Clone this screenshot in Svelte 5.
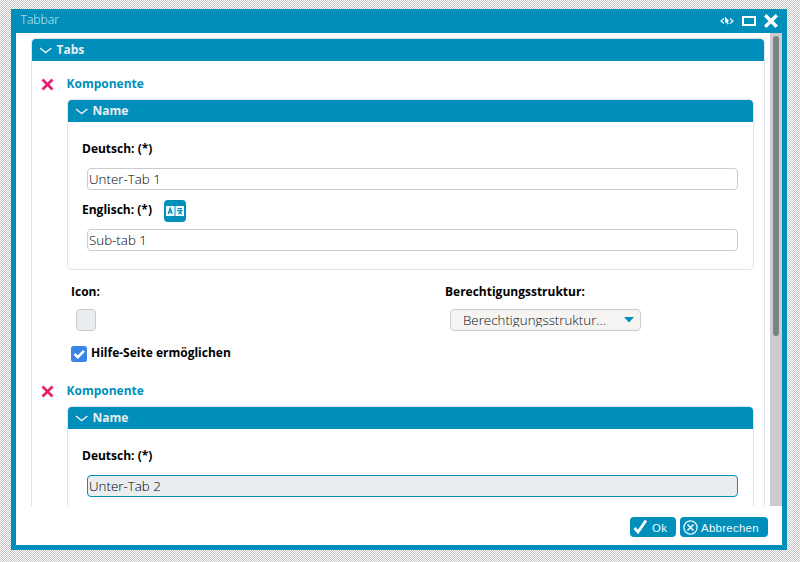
<script>
  const components = [
    { de: 'Unter-Tab 1', en: 'Sub-tab 1', focused: false },
    { de: 'Unter-Tab 2', en: 'Sub-tab 2', focused: true }
  ];
</script>

{#snippet chevron()}
  <svg class="chevron" width="14" height="8" viewBox="0 0 14 8"><path d="M1 1 6.7 5.6 12.4 1" fill="none" stroke="#e9eef2" stroke-width="1.5" /></svg>
{/snippet}

<div class="desktop">
  <section class="window">
    <header class="titlebar">
      <span class="title">Tabbar</span>
      <svg class="eye" width="14" height="10" viewBox="0 0 14 10"><path d="M4 2.5 1 5 4 7.5M10 2.5 13 5 10 7.5" fill="none" stroke="#e9f5f9" stroke-width="1.3" /><path d="M5 .8 9.3 5 7.8 5.3 8.7 8 7.4 8.6 6.4 6 5 7Z" fill="#fff" /></svg>
      <svg class="max" width="14" height="10" viewBox="0 0 14 10"><rect x="1" y="1" width="12" height="8" fill="none" stroke="#fff" stroke-width="2" /></svg>
      <svg class="close" width="14" height="14" viewBox="0 0 14 14"><path d="M1.2 1.2 12.8 12.8M12.8 1.2 1.2 12.8" stroke="#fff" stroke-width="3.4" /></svg>
    </header>
    <div class="body">
      <div class="scroll">
        <div class="panel outer">
          <div class="bar">{@render chevron()}<span>Tabs</span></div>
          {#each components as c}
            <div class="component">
              <div class="comp-title">
                <svg width="13" height="13" viewBox="0 0 13 13"><path d="M1.5 1.5 11.5 11.5M11.5 1.5 1.5 11.5" stroke="#e6216f" stroke-width="2.8" /></svg>
                <span>Komponente</span>
              </div>
              <div class="panel inner">
                <div class="bar">{@render chevron()}<span>Name</span></div>
                <div class="fields">
                  <div class="label">Deutsch: (*)</div>
                  <div class="input" class:focused={c.focused}>{c.de}</div>
                  <div class="label second">Englisch: (*)
                    <button class="translate" aria-label="Übersetzen">
                      <svg width="18" height="10" viewBox="0 0 18 10"><rect width="8.5" height="10" fill="#f2fafc" /><rect x="9.5" width="8.5" height="10" fill="#f2fafc" /><path d="M2.2 8 4.2 2.4 6.2 8M2.9 6.2H5.5" fill="none" stroke="#008fba" stroke-width="1.3" /><path d="M11.5 2.6H16M11.2 4.7H16.4M15.4 4.9 12.4 8M13.2 6 15.8 8" fill="none" stroke="#008fba" stroke-width="1.2" /></svg>
                    </button>
                  </div>
                  <div class="input">{c.en}</div>
                </div>
              </div>
              <div class="options">
                <div class="option">
                  <div class="label">Icon:</div>
                  <div class="swatch"></div>
                </div>
                <div class="option">
                  <div class="label">Berechtigungsstruktur:</div>
                  <div class="select"><span>Berechtigungsstruktur...</span><svg width="10" height="6" viewBox="0 0 10 6"><path d="M0 0H10L5 5.5Z" fill="#008fba" /></svg></div>
                </div>
              </div>
              <div class="check">
                <svg width="16" height="16" viewBox="0 0 16 16"><rect width="16" height="16" rx="2.5" fill="#3a86e6" /><path d="M3.5 8 6.8 11.2 13 4.8" fill="none" stroke="#fff" stroke-width="2.6" /></svg>
                <span class="label">Hilfe-Seite ermöglichen</span>
              </div>
            </div>
          {/each}
        </div>
      </div>
      <div class="track"><div class="thumb"></div></div>
    </div>
    <footer>
      <button class="btn ok"><svg width="15" height="16" viewBox="0 0 15 16"><path d="M1.5 9 5 13 13 1.5" fill="none" stroke="#fff" stroke-width="2.8" /></svg><span>Ok</span></button>
      <button class="btn cancel"><svg width="15" height="15" viewBox="0 0 15 15"><circle cx="7.5" cy="7.5" r="6.6" fill="none" stroke="#e9f5f9" stroke-width="1.3" /><path d="M4.5 4.5 10.5 10.5M10.5 4.5 4.5 10.5" stroke="#e9f5f9" stroke-width="1.7" /></svg><span>Abbrechen</span></button>
    </footer>
  </section>
</div>

<style>
  :global(body) { margin: 0; overflow: hidden; }
  * { box-sizing: border-box; }
  svg { display: block; flex: none; }
  .desktop {
    width: 800px; height: 562px; padding: 9px 0 0 11px;
    background: repeating-conic-gradient(#c4c4c4 0 25%, #fff 0 50%) 0 0 / 2px 2px;
    font-family: "Open Sans", sans-serif; font-size: 13.333px;
  }
  .window { width: 776px; height: 541px; background: #fff; border: solid #008fba; border-width: 0 5px 5px; display: flex; flex-direction: column; }
  .titlebar { height: 24px; background: #008fba; display: flex; align-items: center; padding-right: 4px; flex: none; }
  .title { flex: 1; color: #d6eef5; font-weight: 300; font-size: 12.2px; padding-left: 4.5px; line-height: 20px; margin-bottom: 3px; }
  .max { margin-left: 8px; }
  .close { margin-left: 8px; }
  .body { height: 473px; display: flex; flex: none; }
  .scroll { width: 754px; height: 473px; overflow: hidden; padding: 5px 5px 0 15px; }
  .track { width: 12px; height: 473px; background: #ccc; padding: 3px 3px 0; }
  .thumb { width: 6px; height: 300px; border-radius: 3px; background: #7d8283; }
  .panel { border: 1px solid #dfe3ee; border-radius: 5px; }
  .outer { height: 700px; }
  .bar { height: 22px; background: #008fba; border-radius: 4px 4px 0 0; color: #e9eef2; font-weight: 700; font-size: 12px; line-height: 22px; display: flex; align-items: center; padding-left: 7px; }
  .bar span { margin-left: 3.5px; }
  .chevron { margin-top: 1px; }
  .component { height: 307px; padding: 13px 10px 0 35px; }
  .comp-title { display: flex; align-items: center; height: 18px; margin-left: -26px; color: #008fba; font-weight: 700; font-size: 12px; }
  .comp-title svg { margin-top: 3px; }
  .comp-title span { margin-left: 12.5px; }
  .inner { height: 171px; margin-top: 7px; }
  .fields { padding: 18px 15px 0 14px; }
  .label { font-weight: 700; font-size: 12px; line-height: 18px; color: #000; }
  .input { height: 22px; margin: 10px 0 0 5px; border: 1px solid #ccc; border-radius: 4px; padding-left: 1px; line-height: 20px; font-weight: 300; color: #000; background: #fff; }
  .input.focused { border-color: #008fba; background: #e9edf0; }
  .second { margin-top: 11px; height: 22px; display: flex; align-items: flex-start; }
  .second + .input { margin-top: 6px; }
  .translate { width: 22px; height: 22px; margin: -1px 0 0 12px; padding: 0 2px; border: 0; border-radius: 4px; background: #008fba; display: flex; align-items: center; }
  .options { display: flex; margin: 13px 0 0 4px; }
  .option { width: 374px; flex: none; }
  .option:last-child { width: 200px; }
  .swatch { width: 20px; height: 22px; margin: 8px 0 0 5px; border: 1px solid #ccc; border-radius: 4px; background: #e9edf0; }
  .select { width: 191px; height: 22px; margin: 8px 0 0 5px; border: 1px solid #ccc; border-radius: 4px; background: #f5f4f3; display: flex; padding-left: 12px; color: #111; font-weight: 300; }
  .select span { width: 161px; height: 17px; overflow: hidden; line-height: 21px; }
  .select svg { margin-top: 7px; }
  .check { display: flex; margin: 13px 0 0 4px; }
  .check svg { margin-top: 2px; }
  .check .label { margin-left: 4px; }
  footer { display: flex; justify-content: flex-end; gap: 4px; padding: 11px 14px 0 0; }
  .btn { height: 20px; border: 0; border-radius: 4px; background: #008fba; color: #f2fafc; font: 11.4px "Liberation Sans", sans-serif; letter-spacing: .3px; display: flex; align-items: center; padding: 0 0 0 3px; }
  .ok { width: 46px; }
  .ok span { margin: 2px 0 0 4px; }
  .cancel { width: 88px; }
  .cancel span { margin: 2px 0 0 3px; }
</style>
